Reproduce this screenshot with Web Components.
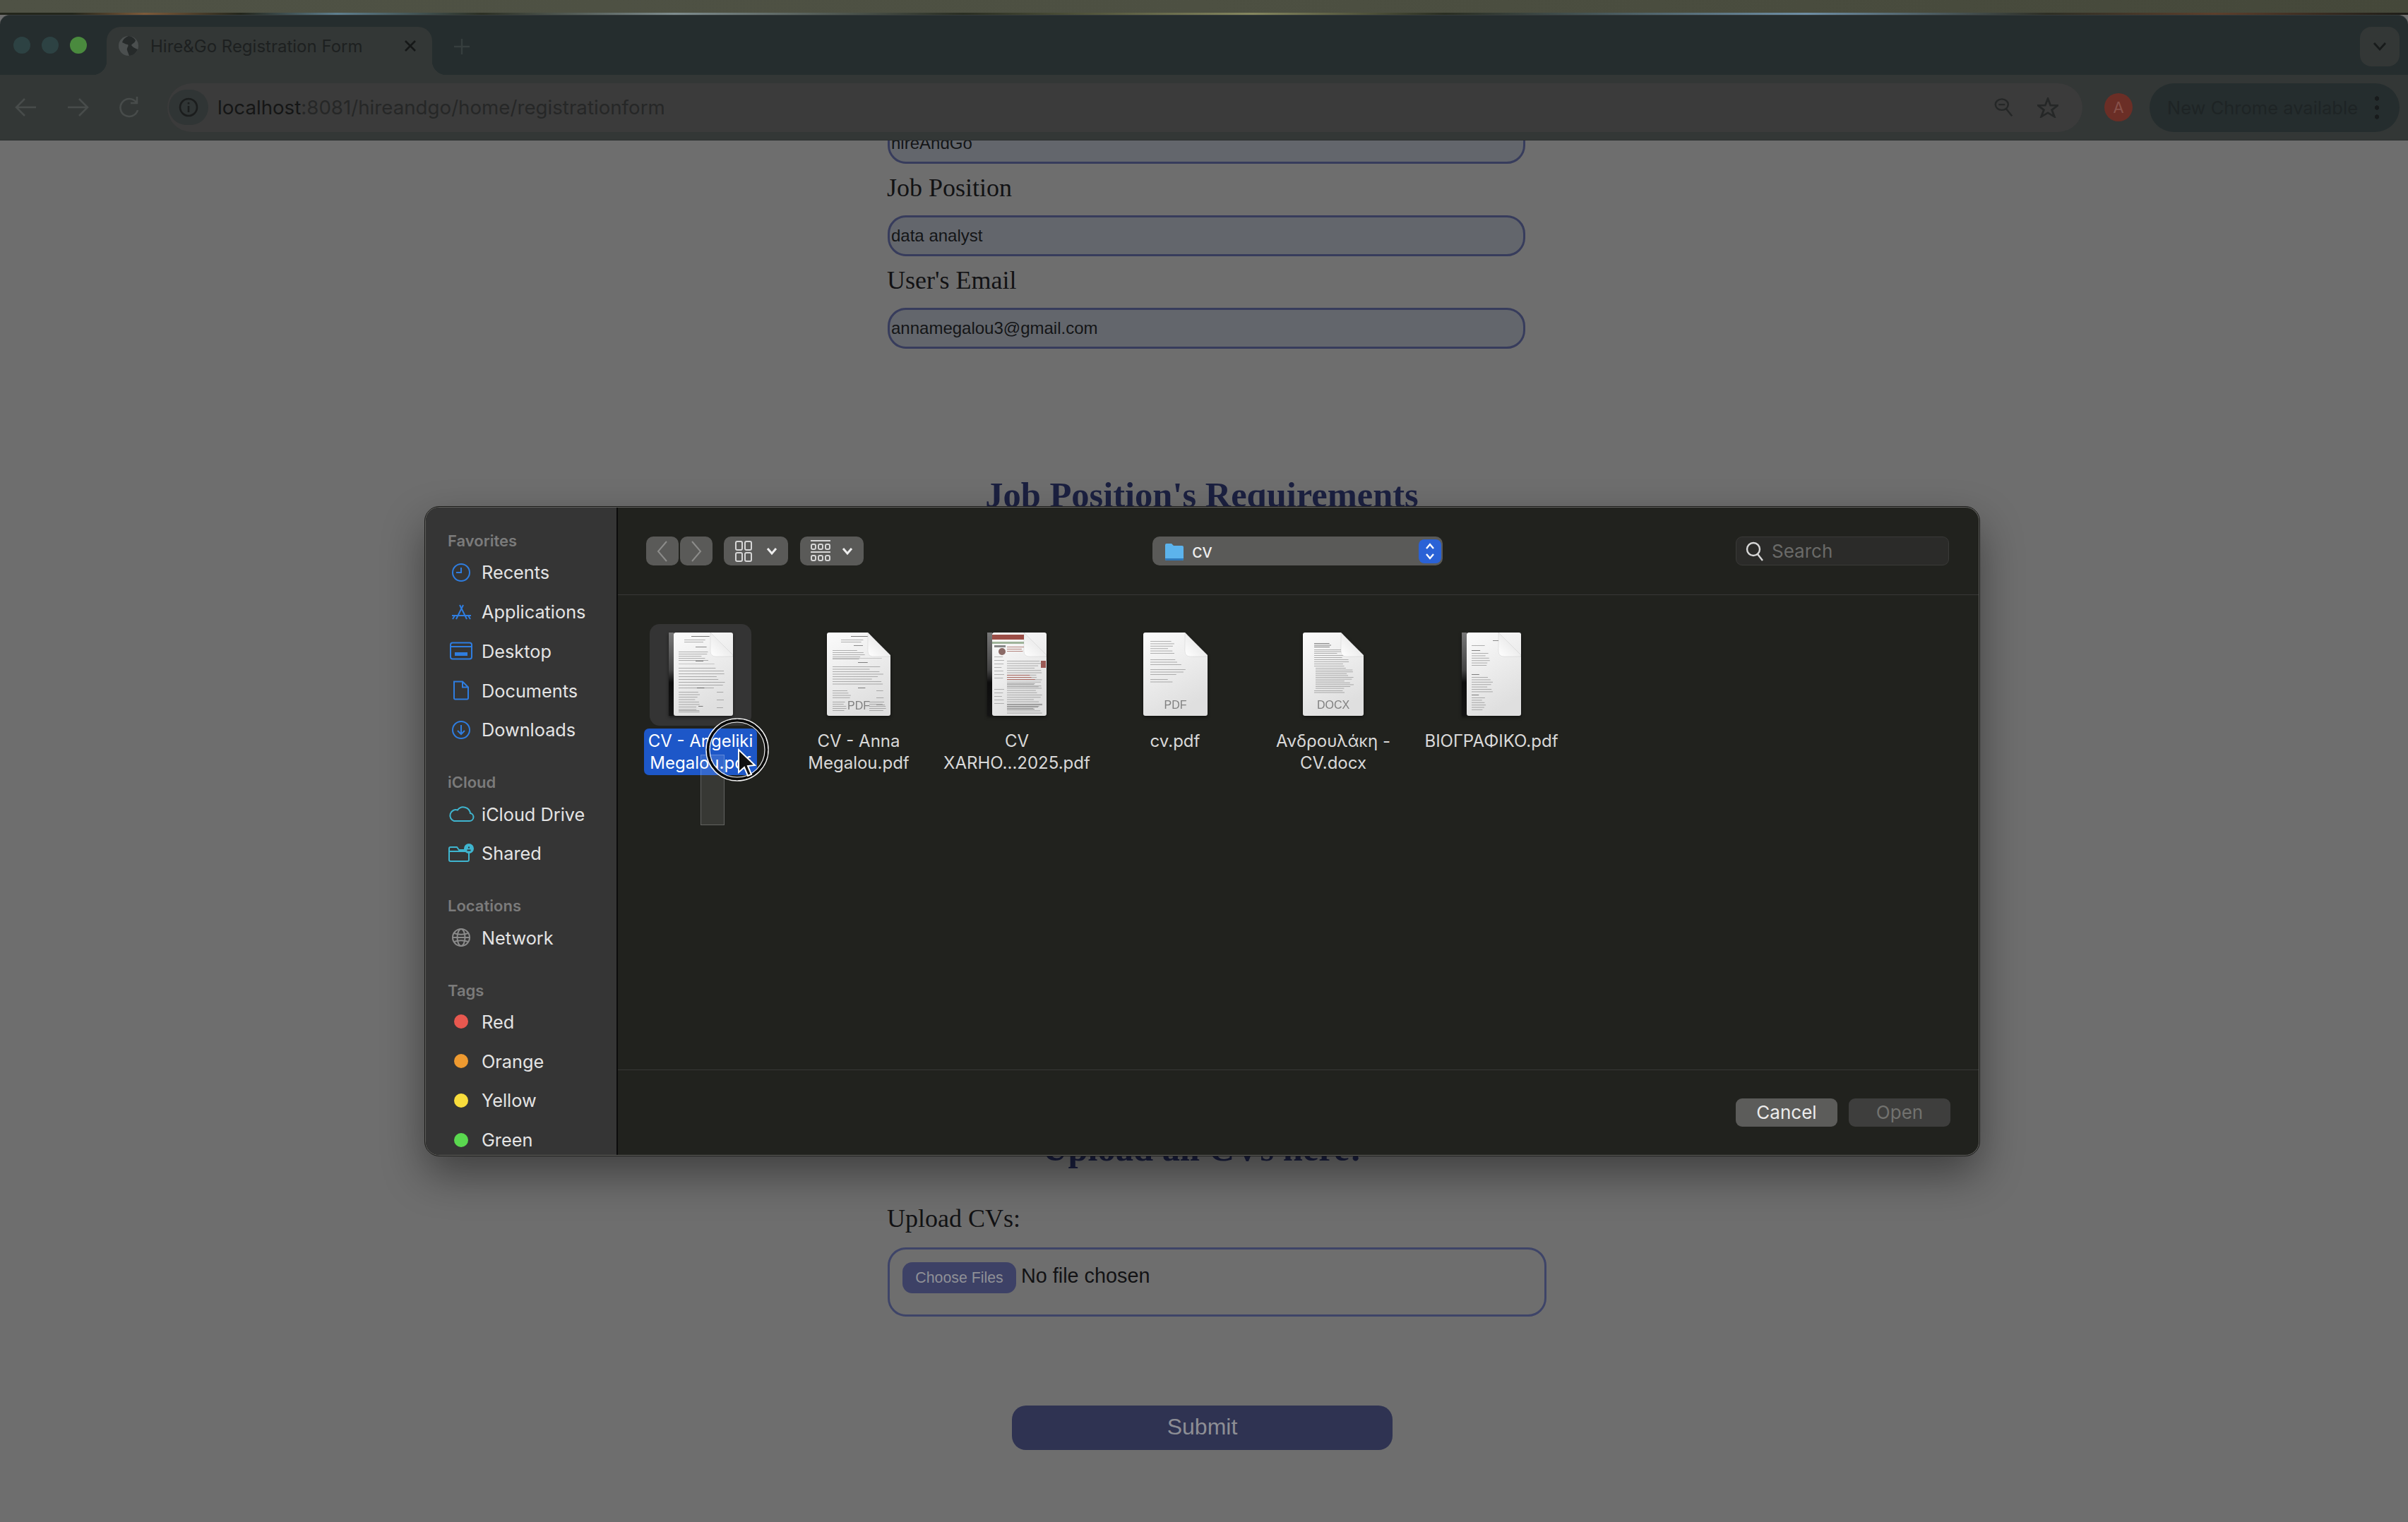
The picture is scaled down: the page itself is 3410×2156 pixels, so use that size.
<!DOCTYPE html>
<html>
<head>
<meta charset="utf-8">
<title>Hire&amp;Go Registration Form</title>
<style>
  html, body { margin: 0; padding: 0; background: #6e6e6e; }
  html { height: 2156px; overflow: hidden; }
  body { width: 3410px; height: 2156px; overflow: hidden; }
</style>
</head>
<body>
<browser-window>
  <page-form></page-form>
  <file-dialog slot="over"></file-dialog>
  <mouse-mark slot="over"></mouse-mark>
</browser-window>

<script>
const UI_FONT = '"Inter", "Noto Sans", sans-serif';

class BrowserWindow extends HTMLElement {
  constructor() {
    super();
    this.attachShadow({mode: 'open'}).innerHTML = `
    <style>
      :host { display: flex; flex-direction: column; width: 3410px; height: 2156px; font-family: ${UI_FONT}; overflow: hidden; }
      .wall { height: 18px; background: linear-gradient(90deg, #4f5245, #4d5042 50%, #45483a); }
      .stripe { height: 3px; background: linear-gradient(90deg, #23261c 0 3%, #7d5a3a 6%, #23261c 10%, #5f7f8f 14%, #2c3024 20%, #7f8d8f 28%, #2a2e22 40%, #85875f 52%, #2a2e22 60%, #6f8fa5 75%, #2e2f25 85%, #5c3f2c 92%, #1d1d18); }
      .tabs { height: 85px; background: #252d2e; display: flex; align-items: flex-end; border-top: 1px solid #343a3b; box-sizing: border-box; border-radius: 14px 14px 0 0; }
      .lights { display: flex; gap: 16px; padding-left: 19px; height: 84px; align-items: center; width: 132px; flex: none; }
      .lights i { width: 24px; height: 24px; border-radius: 50%; background: #2d4243; }
      .lights i:last-child { background: #4a8a3e; }
      .tab { position: relative; width: 461px; height: 68px; background: #333736; border-radius: 20px 20px 0 0; display: flex; align-items: center; color: #1d2020; font-size: 24px; box-sizing: border-box; padding: 0 0 14px 16px; }
      .tab:before, .tab:after { content: ""; position: absolute; bottom: 0; width: 20px; height: 20px; }
      .tab:before { left: -20px; background: radial-gradient(circle at 0 0, #252d2e 20px, #333736 20.5px); }
      .tab:after { right: -20px; background: radial-gradient(circle at 100% 0, #252d2e 20px, #333736 20.5px); }
      .tab svg.fav { width: 30px; height: 30px; margin-right: 16px; }
      .tab span { flex: 1; white-space: nowrap; }
      .tab svg.x { width: 20px; height: 20px; margin-right: 21px; }
      .plus { margin: 0 0 28px 30px; width: 24px; height: 24px; }
      .spacer { flex: 1; }
      .more { width: 56px; height: 56px; border-radius: 16px; background: #333736; margin: 0 12px 12px 0; display: flex; align-items: center; justify-content: center; }
      .bar { height: 93px; background: #333736; border-bottom: 1px solid #2b2f2f; box-sizing: border-box; display: flex; align-items: center; padding-left: 19px; }
      .nav { display: flex; gap: 37px; margin-right: 36px; }
      .nav svg { width: 36px; height: 36px; }
      .url { flex: 1; height: 69px; border-radius: 35px; background: #3b3b3b; display: flex; align-items: center; padding-left: 2px; }
      .info { width: 56px; height: 50px; border-radius: 25px; background: #303535; display: flex; align-items: center; justify-content: center; margin-right: 13px; }
      .addr { flex: 1; font-size: 27.7px; color: #262727; white-space: nowrap; }
      .addr b { font-weight: 400; color: #151616; }
      .url svg.z { margin-right: 34px; }
      .url svg.s { margin-right: 34px; }
      .avatar { width: 40px; height: 40px; border-radius: 50%; background: #6b2e26; color: #87514a; font-size: 22px; display: flex; align-items: center; justify-content: center; margin: 0 24px 0 31px; }
      .update { width: 354px; height: 69px; border-radius: 35px; background: #252d2e; color: #1e2425; font-size: 25.5px; display: flex; align-items: center; justify-content: space-between; box-sizing: border-box; padding: 0 29px 0 25px; margin-right: 12px; white-space: nowrap; }
      .update i { width: 6px; height: 38px; background: radial-gradient(circle, #181b1c 3px, transparent 3.4px) 0 0 / 6px 13px; }
      .view { position: relative; flex: 1; overflow: hidden; background: #6e6e6e; }
    </style>
    <div class="wall"></div>
    <div class="stripe"></div>
    <div class="tabs">
      <div class="lights"><i></i><i></i><i></i></div>
      <div class="tab">
        <svg class="fav" viewBox="0 0 30 30"><circle cx="15" cy="15" r="14" fill="#4b4f4f"/><path d="M15 1c-5 2-8 5-9 9 3 1 5 3 8 3 2 3-2 4-1 8l3 8c5 0 10-4 12-9-4-2-7-3-9-6 2-3 5-3 6-7-2-3-6-6-10-6z" fill="#262a2a"/></svg>
        <span>Hire&amp;Go Registration Form</span>
        <svg class="x" viewBox="0 0 20 20"><path d="M3 3l14 14M17 3L3 17" stroke="#161818" stroke-width="2.6" fill="none"/></svg>
      </div>
      <svg class="plus" viewBox="0 0 24 24"><path d="M12 1v22M1 12h22" stroke="#363e3e" stroke-width="2.4"/></svg>
      <div class="spacer"></div>
      <div class="more"><svg width="20" height="14" viewBox="0 0 20 14"><path d="M2 2l8 9 8-9" stroke="#181b1b" stroke-width="2.8" fill="none"/></svg></div>
    </div>
    <div class="bar">
      <div class="nav">
        <svg viewBox="0 0 36 36"><path d="M32 18H5M16 6L4 18l12 12" stroke="#484c4b" stroke-width="2.6" fill="none"/></svg>
        <svg viewBox="0 0 36 36"><path d="M4 18h27M20 6l12 12-12 12" stroke="#484c4b" stroke-width="2.6" fill="none"/></svg>
        <svg viewBox="0 0 36 36"><path d="M28 11a12.500 12.500 0 1 0 2 11M29 3v9h-9" stroke="#484c4b" stroke-width="2.6" fill="none"/></svg>
      </div>
      <div class="url">
        <div class="info"><svg width="28" height="28" viewBox="0 0 28 28"><circle cx="14" cy="14" r="12" stroke="#1b1d1d" stroke-width="2.6" fill="none"/><path d="M14 12v9M14 7v2.600" stroke="#1b1d1d" stroke-width="2.600"/></svg></div>
        <div class="addr"><b>localhost</b>:8081/hireandgo/home/registrationform</div>
        <svg class="z" width="27" height="28" viewBox="0 0 30 36" preserveAspectRatio="none"><circle cx="12" cy="13" r="10" stroke="#252727" stroke-width="2.800" fill="none"/><path d="M7 13h10M19 21l9 13" stroke="#252727" stroke-width="2.800"/></svg>
        <svg class="s" width="30" height="29" viewBox="0 0 32 36" preserveAspectRatio="none"><path d="M16 2l4 12h11l-9 8 4 12-10-7-10 7 4-12-9-8h11z" stroke="#252727" stroke-width="3" fill="none"/></svg>
      </div>
      <div class="avatar">A</div>
      <div class="update"><span>New Chrome available</span><i></i></div>
    </div>
    <div class="view"><slot></slot><slot name="over"></slot></div>`;
  }
}

class FormField extends HTMLElement {
  constructor() {
    super();
    this.attachShadow({mode: 'open'}).innerHTML = `
    <style>
      :host { display: block; width: 903px; font-family: "Liberation Serif", serif; }
      label { display: block; height: 73px; line-height: 69px; font-size: 36px; color: #121214; margin-left: -1px; }
      .box { height: 58px; box-sizing: border-box; border: 3px solid #373c5c; border-radius: 26px; background: #63666c; padding-left: 2px; font: 24px/52px "Liberation Sans", sans-serif; color: #141517; }
      :host([nolabel]) label { display: none; }
    </style>
    <label><slot name="label"></slot></label>
    <div class="box"><slot></slot></div>`;
  }
}

class PageForm extends HTMLElement {
  constructor() {
    super();
    this.attachShadow({mode: 'open'}).innerHTML = `
    <style>
      :host { display: block; width: 3410px; margin-top: -25px; font-family: "Liberation Serif", serif; }
      .fields { padding-left: 1257px; }
      h2 { margin: 0; padding-right: 6px; text-align: center; font-size: 50.5px; line-height: 58px; font-weight: 700; color: #1b2040; }
      h2.req { margin-top: 178px; }
      h2.up { margin-top: 868px; }
      .lab { padding: 34px 0 0 1256px; height: 73px; line-height: 72px; font-size: 36px; color: #121214; }
      .file { margin: 4px 0 0 1257px; width: 933px; height: 98px; box-sizing: border-box; border: 3px solid #3e4468; border-radius: 26px; display: flex; align-items: flex-start; padding: 18px 0 0 18px; font: 28.800px/38px "Liberation Sans", sans-serif; color: #121214; gap: 7px; }
      .pick { width: 161px; height: 44px; border-radius: 14px; background: #3d4166; color: #8f9096; font: 21.300px/44px "Liberation Sans", sans-serif; text-align: center; }
      .submit { margin: 126px 0 0 1433px; width: 539px; height: 63px; border-radius: 20px; background: #2f3352; color: #8d8e95; font: 32px/60px "Liberation Sans", sans-serif; text-align: center; }
    </style>
    <div class="fields">
      <form-field nolabel>hireAndGo</form-field>
      <form-field><span slot="label">Job Position</span>data analyst</form-field>
      <form-field><span slot="label">User's Email</span>annamegalou3@gmail.com</form-field>
    </div>
    <h2 class="req">Job Position's Requirements</h2>
    <h2 class="up">Upload all CVs here!</h2>
    <div class="lab">Upload CVs:</div>
    <div class="file"><div class="pick">Choose Files</div><div>No file chosen</div></div>
    <div class="submit">Submit</div>`;
  }
}

const SIDE_ICONS = {
  clock: '<circle cx="19" cy="14" r="12"/><path d="M19 7v7h-7"/>',
  apps: '<path d="M12 24L22 4M27 24L17 4M6 19h27M7 24l3-5M32 24l-3-5"/>',
  desk: '<rect x="4" y="2.500" width="30" height="23" rx="3"/><path d="M4 8h30"/><rect x="11" y="17" width="16" height="3" fill="currentColor"/>',
  doc: '<path d="M9 1.500h12l8 8V25a1.500 1.500 0 0 1-1.500 1.500h-17A1.500 1.500 0 0 1 9 25zM21 1.500V9.500h8"/>',
  down: '<circle cx="19" cy="14" r="12"/><path d="M19 7v13M14 15l5 5 5-5"/>',
  cloud: '<path d="M9 24h22a5.500 5.500 0 0 0 1-10.900A10 10 0 0 0 14 8.500 7.800 7.800 0 0 0 9 24z"/>',
  shared: '<path d="M26 9H16l-3-4H4a2 2 0 0 0-2 2v16a2 2 0 0 0 2 2h24a2 2 0 0 0 2-2V13M2 11h24"/><circle cx="30" cy="7" r="6" fill="currentColor"/><path d="M30 4.500v2M27.500 9.500h5" stroke="#353535"/>',
  globe: '<circle cx="19" cy="14" r="12"/><ellipse cx="19" cy="14" rx="5.500" ry="12"/><path d="M7 14h24M9 8c6 2 14 2 20 0M9 20c6-2 14-2 20 0"/>'
};

class SideItem extends HTMLElement {
  constructor() {
    super();
    const icon = this.getAttribute('icon');
    const dot = this.getAttribute('dot');
    const tone = this.getAttribute('tone') || '#2f7ddf';
    const art = dot
      ? `<i style="background:${dot}"></i>`
      : `<svg viewBox="0 0 38 28" width="38" height="28" style="color:${tone}" fill="none" stroke="currentColor" stroke-width="2">${SIDE_ICONS[icon]}</svg>`;
    this.attachShadow({mode: 'open'}).innerHTML = `
    <style>
      :host { display: flex; align-items: center; height: 55.75px; gap: 10px; color: #e4e4e4; font-size: 25.3px; white-space: nowrap; }
      .ic { width: 38px; display: flex; justify-content: center; }
      i { width: 20px; height: 20px; border-radius: 50%; }
    </style>
    <div class="ic">${art}</div><slot></slot>`;
  }
}

class SideHead extends HTMLElement {
  constructor() {
    super();
    this.attachShadow({mode: 'open'}).innerHTML = `
    <style>
      :host { display: block; height: 34px; line-height: 34px; margin-top: 29.5px; color: #7b7b7b; font-size: 22px; font-weight: 600; }
      :host([first]) { margin-top: 0; }
    </style><slot></slot>`;
  }
}

// small repeatable text lines for the file previews, never real words
function textLines(rows) {
  let out = '';
  rows.forEach(([y, n, gap, x, w, col]) => {
    for (let i = 0; i < n; i++) {
      const len = w * (0.72 + 0.28 * Math.abs(Math.sin(i * 2.3 + y)));
      out += `<rect x="${x}" y="${y + i * gap}" width="${len.toFixed(1)}" height="1" opacity=".6" fill="${col || '#808080'}"/>`;
    }
  });
  return out;
}

const DOC_KINDS = {
  angeliki: { w: 91, spine: true, rows: [[5, 1, 2, 32, 26, '#222'], [10, 2, 3, 22, 34], [20, 1, 2, 38, 16, '#444'], [27, 5, 3, 14, 42], [44, 1, 2, 14, 70, '#aaa'], [40, 1, 2, 38, 12, '#333'], [50, 8, 4, 14, 66], [78, 1, 2, 40, 12, '#333'], [84, 9, 3.500, 14, 30], [84, 3, 11, 68, 10], [104, 1, 2, 42, 8, '#333'], [110, 1, 2, 14, 40]] },
  anna: { w: 90, rows: [[5, 1, 2, 34, 24, '#222'], [10, 2, 3, 20, 36], [18, 1, 2, 38, 14, '#444'], [25, 5, 3, 8, 46], [36, 1, 2, 8, 70, '#aaa'], [42, 1, 2, 44, 14, '#333'], [48, 8, 3.500, 8, 72], [78, 1, 2, 44, 12, '#333'], [82, 4, 3.300, 8, 26], [82, 3, 10, 70, 12], [98, 5, 3, 8, 20], [98, 5, 3, 60, 24]], label: 'PDF', ly: 109, ls: 16 },
  xarho: { w: 84, spine: true, red: true, rows: [[20, 3, 3, 28, 26, '#8b3a30'], [40, 12, 3.300, 28, 50], [60, 3, 3, 28, 40, '#a5352a'], [72, 14, 3.200, 28, 50], [34, 7, 5, 10, 14, '#888'], [80, 5, 5, 10, 14, '#888'], [102, 3, 3, 28, 50, '#555']] },
  cv: { w: 91, rows: [[12, 6, 3.400, 10, 34], [38, 3, 3.500, 10, 44], [52, 3, 3.500, 10, 50], [66, 2, 3.500, 10, 34]], label: 'PDF', ly: 108, ls: 16 },
  docx: { w: 86, rows: [[15, 3, 2.500, 16, 24, '#333'], [24, 3, 2.500, 16, 40], [32, 6, 3, 16, 50], [50, 12, 2.600, 18, 54], [82, 2, 2.500, 16, 50]], label: 'DOCX', ly: 108, ls: 16 },
  bio: { w: 84, spine: true, rows: [[11, 1, 2, 44, 12, '#444'], [18, 1, 2, 14, 20], [25, 1, 2, 14, 16, '#333'], [29, 6, 3.400, 14, 26], [59, 1, 2, 14, 12, '#333'], [63, 7, 3.400, 14, 30], [88, 1, 2, 14, 14, '#333'], [92, 6, 3.400, 14, 20]] }
};

class DocThumb extends HTMLElement {
  constructor() {
    super();
    const d = DOC_KINDS[this.getAttribute('kind')];
    const w = d.w, h = 118, fx = w - 32;
    const page = d.spine
      ? `<rect x="7" width="${w - 7}" height="${h}" rx="3" fill="url(#pg)"/>`
      : `<path d="M3 0H${fx}L${w} 34V${h - 3}a3 3 0 0 1-3 3H3a3 3 0 0 1-3-3V3a3 3 0 0 1 3-3z" fill="url(#pg)"/>`;
    const spine = d.spine ? `<rect width="7" height="${h}" fill="url(#sp)"/>` : '';
    const red = d.red ? `<rect x="7" y="3" width="45" height="7" fill="#8c3028" opacity=".85"/><rect x="7" y="13" width="55" height="3" fill="#9fb49a"/><rect x="10" y="18" width="16" height="3" fill="#888"/><circle cx="21" cy="27" r="5" fill="#8a6a66"/><rect x="76" y="40" width="7" height="10" fill="#9c5a55"/>` : '';
    const label = d.label ? `<text x="${w / 2}" y="${d.ly}" text-anchor="middle" font-family="'Liberation Sans', sans-serif" font-size="${d.ls}" fill="#808080">${d.label}</text>` : '';
    this.attachShadow({mode: 'open'}).innerHTML = `
    <style>:host { display: block; width: ${w}px; height: ${h}px; filter: drop-shadow(0 2px 2px rgba(0,0,0,.5)); } svg { display: block; }</style>
    <svg width="${w}" height="${h}" viewBox="0 0 ${w} ${h}">
      <defs>
        <linearGradient id="pg" x1="0" y1="0" x2="0.400" y2="1"><stop offset="0" stop-color="#fbfbfb"/><stop offset="1" stop-color="#dfdfdf"/></linearGradient>
        <linearGradient id="sp" x1="0" y1="0" x2="0" y2="1"><stop offset="0" stop-color="#777"/><stop offset=".45" stop-color="#444"/><stop offset=".6" stop-color="#0d0d0d"/><stop offset="1" stop-color="#141414"/></linearGradient>
        <linearGradient id="fd" x1="0" y1="1" x2="1" y2="0"><stop offset="0" stop-color="#ffffff"/><stop offset="1" stop-color="#dcdcdc"/></linearGradient>
      </defs>
      ${page}${spine}${red}${textLines(d.rows)}${label}
      <path d="M${fx} 0L${w} 32V34H${fx + 8}Q${fx} 34 ${fx} 26Z" fill="url(#fd)" stroke="rgba(0,0,0,.12)" stroke-width=".6"/>
    </svg>`;
  }
}

class FileItem extends HTMLElement {
  constructor() {
    super();
    this.attachShadow({mode: 'open'}).innerHTML = `
    <style>
      :host { display: flex; flex-direction: column; align-items: center; width: 224px; flex: none; }
      .art { width: 144px; height: 144px; border-radius: 14px; display: flex; justify-content: center; padding-top: 12px; box-sizing: border-box; }
      .name { margin-top: 4px; padding: 2px 6px; border-radius: 7px; text-align: center; font-size: 24px; line-height: 31px; color: #d9d9d9; white-space: nowrap; }
      :host([selected]) .art { background: #343434; }
      :host([selected]) .name { background: #1d57c8; color: #fff; }
    </style>
    <div class="art"><doc-thumb kind="${this.getAttribute('kind')}"></doc-thumb></div>
    <div class="name"><slot></slot></div>`;
  }
}

class FileDialog extends HTMLElement {
  constructor() {
    super();
    this.attachShadow({mode: 'open'}).innerHTML = `
    <style>
      :host { position: absolute; left: 602px; top: 519px; width: 2201px; height: 919px; box-sizing: border-box; display: flex; border-radius: 20px; overflow: hidden; font-family: ${UI_FONT}; background: #21221e; border: 1px solid #62625f; outline: 1px solid #1a1a18; box-shadow: 0 26px 60px rgba(0,0,0,.42); }
      .side { flex: none; background: #353535; border-right: 2px solid #0c0c0c; padding: 30px 0 0 31px; width: 239px; overflow: hidden; }
      .main { flex: 1; display: flex; flex-direction: column; min-width: 0; }
      .head { height: 124px; flex: none; border-bottom: 1px solid #383836; display: grid; grid-template-columns: 1fr 411px 1fr; align-items: center; box-sizing: border-box; padding: 0 42px 0 40px; }
      .tools { display: flex; }
      .btn { height: 41px; border-radius: 10px; background: #5a5a58; display: flex; align-items: center; justify-content: center; box-sizing: border-box; }
      .nav { width: 46px; margin-right: 2px; }
      .grp { width: 91px; margin: 0 0 0 14px; gap: 20px; }
      .grp.b { width: 90px; margin-left: 17px; gap: 16px; }
      .path { justify-content: flex-start; padding-left: 17px; color: #eee; font-size: 26px; position: relative; gap: 11px; }
      .step { position: absolute; right: 2px; top: 4px; width: 32px; height: 34px; border-radius: 8px; background: #2a62d6; display: flex; align-items: center; justify-content: center; }
      .right { display: flex; justify-content: flex-end; }
      .search { width: 302px; height: 41px; border-radius: 9px; background: #2b2b29; border: 1px solid #3a3a38; box-sizing: border-box; display: flex; align-items: center; padding-left: 13px; gap: 11px; color: #6a6a68; font-size: 26px; }
      .files { flex: 1; display: flex; align-items: flex-start; padding: 41px 0 0 5px; }
      .foot { height: 121px; flex: none; border-top: 1px solid #383836; box-sizing: border-box; display: flex; justify-content: flex-end; gap: 16px; padding: 40px 40px 0 0; }
      .act { width: 144px; height: 40px; border-radius: 9px; font-size: 26px; line-height: 39px; text-align: center; background: #5c5c5a; color: #ececec; }
      .act.off { background: #3e3e3d; color: #72726f; }
    </style>
    <div class="side">
      <side-head first>Favorites</side-head>
      <side-item icon="clock">Recents</side-item>
      <side-item icon="apps">Applications</side-item>
      <side-item icon="desk">Desktop</side-item>
      <side-item icon="doc">Documents</side-item>
      <side-item icon="down">Downloads</side-item>
      <side-head>iCloud</side-head>
      <side-item icon="cloud" tone="#3fb5cf">iCloud Drive</side-item>
      <side-item icon="shared" tone="#3fb5cf">Shared</side-item>
      <side-head>Locations</side-head>
      <side-item icon="globe" tone="#8b8b8b">Network</side-item>
      <side-head>Tags</side-head>
      <side-item dot="#e8584f">Red</side-item>
      <side-item dot="#ee9a30">Orange</side-item>
      <side-item dot="#f9dd3c">Yellow</side-item>
      <side-item dot="#5ad84f">Green</side-item>
    </div>
    <div class="main">
      <div class="head">
        <div class="tools">
          <div class="btn nav"><svg width="16" height="32" viewBox="0 0 16 32"><path d="M14 2L2 16l12 14" stroke="#8c8c8a" stroke-width="2" fill="none"/></svg></div>
          <div class="btn nav"><svg width="16" height="32" viewBox="0 0 16 32"><path d="M2 2l12 14L2 30" stroke="#8c8c8a" stroke-width="2" fill="none"/></svg></div>
          <div class="btn grp"><svg width="24" height="32" viewBox="0 0 24 32" fill="none" stroke="#d6d6d6" stroke-width="2"><rect x="1" y="2" width="9" height="12" rx="2"/><rect x="14" y="2" width="9" height="12" rx="2"/><rect x="1" y="18" width="9" height="12" rx="2"/><rect x="14" y="18" width="9" height="12" rx="2"/></svg><svg width="16" height="12" viewBox="0 0 16 12"><path d="M2 2l6 7 6-7" stroke="#eee" stroke-width="3" fill="none"/></svg></div>
          <div class="btn grp b"><svg width="28" height="34" viewBox="0 0 28 34" fill="none" stroke="#d6d6d6" stroke-width="2"><path d="M0 2h28M0 18h28"/><rect x="1" y="7" width="6" height="7" rx="2"/><rect x="11" y="7" width="6" height="7" rx="2"/><rect x="21" y="7" width="6" height="7" rx="2"/><rect x="1" y="23" width="6" height="7" rx="2"/><rect x="11" y="23" width="6" height="7" rx="2"/><rect x="21" y="23" width="6" height="7" rx="2"/></svg><svg width="16" height="12" viewBox="0 0 16 12"><path d="M2 2l6 7 6-7" stroke="#eee" stroke-width="3" fill="none"/></svg></div>
        </div>
        <div class="btn path">
          <svg width="28" height="28" viewBox="0 0 28 28"><path d="M1 5a2 2 0 0 1 2-2h7l3 3h12a2 2 0 0 1 2 2v17a2 2 0 0 1-2 2H3a2 2 0 0 1-2-2z" fill="#5cb3ec"/><path d="M1 25a2 2 0 0 0 2 2h22a2 2 0 0 0 2-2v-1H1z" fill="#2f78b8"/></svg>
          <span>cv</span>
          <div class="step"><svg width="16" height="28" viewBox="0 0 16 28" fill="none" stroke="#fff" stroke-width="2.400"><path d="M3 10l5-6 5 6M3 18l5 6 5-6"/></svg></div>
        </div>
        <div class="right"><div class="search"><svg width="26" height="28" viewBox="0 0 26 28" fill="none" stroke="#d8d8d8" stroke-width="2.400"><circle cx="11" cy="11" r="9"/><path d="M17 18l7 9"/></svg><span>Search</span></div></div>
      </div>
      <div class="files">
        <file-item kind="angeliki" selected>CV - Angeliki<br>Megalou.pdf</file-item>
        <file-item kind="anna">CV - Anna<br>Megalou.pdf</file-item>
        <file-item kind="xarho">CV<br>XARHO...2025.pdf</file-item>
        <file-item kind="cv">cv.pdf</file-item>
        <file-item kind="docx">Ανδρουλάκη -<br>CV.docx</file-item>
        <file-item kind="bio">ΒΙΟΓΡΑΦΙΚΟ.pdf</file-item>
      </div>
      <div class="foot"><div class="act">Cancel</div><div class="act off">Open</div></div>
    </div>`;
  }
}

// the drag ghost and the screen recorder's ring around the pointer, both over the dialog
class MouseMark extends HTMLElement {
  constructor() {
    super();
    this.attachShadow({mode: 'open'}).innerHTML = `
    <style>
      :host { position: absolute; left: 0; top: 0; width: 0; height: 0; }
      .ghost { position: absolute; left: 992px; top: 870px; width: 34px; height: 100px; box-sizing: border-box; background: rgba(255,255,255,.1); border: 1px solid rgba(255,255,255,.22); }
      svg { position: absolute; left: 992px; top: 810px; }
    </style>
    <div class="ghost"></div>
    <svg width="104" height="104" viewBox="0 0 104 104">
      <circle cx="52" cy="53" r="44" fill="none" stroke="#f2f2f2" stroke-width="1.500"/>
      <circle cx="52" cy="53" r="41.500" fill="none" stroke="#0a0a0a" stroke-width="3.500"/>
      <circle cx="52" cy="53" r="39" fill="none" stroke="#eee" stroke-width="1.200"/>
      <path d="M54 53V85l8-7 5 12 5-2-5-12 10-1z" fill="#111" stroke="#fff" stroke-width="2"/>
    </svg>`;
  }
}

customElements.define('form-field', FormField);
customElements.define('page-form', PageForm);
customElements.define('side-item', SideItem);
customElements.define('side-head', SideHead);
customElements.define('doc-thumb', DocThumb);
customElements.define('file-item', FileItem);
customElements.define('file-dialog', FileDialog);
customElements.define('mouse-mark', MouseMark);
customElements.define('browser-window', BrowserWindow);
</script>
</body>
</html>
